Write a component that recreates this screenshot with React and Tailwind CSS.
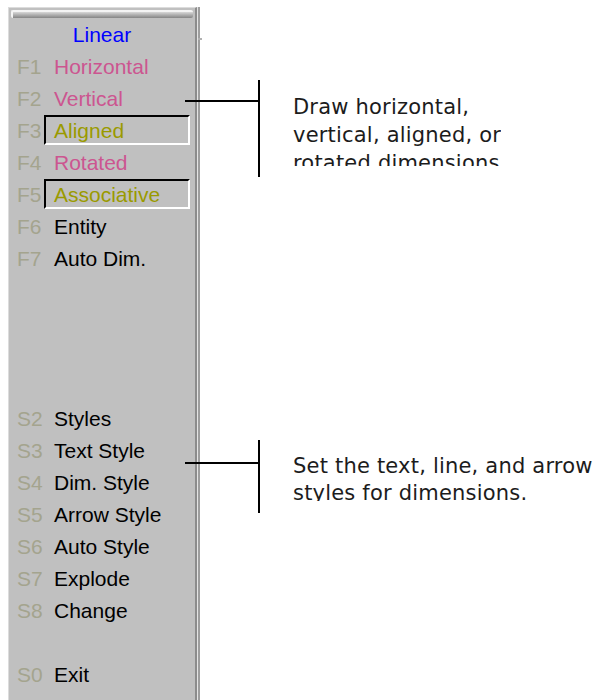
const rows = [
  { key: "F1", label: "Horizontal", color: "text-[#cc5590]" },
  { key: "F2", label: "Vertical", color: "text-[#cc5590]" },
  { key: "F3", label: "Aligned", color: "text-[#9a9a00]", boxed: true },
  { key: "F4", label: "Rotated", color: "text-[#cc5590]" },
  { key: "F5", label: "Associative", color: "text-[#9a9a00]", boxed: true },
  { key: "F6", label: "Entity", color: "text-black" },
  { key: "F7", label: "Auto Dim.", color: "text-black" },
  null,
  null,
  null,
  null,
  { key: "S2", label: "Styles", color: "text-black" },
  { key: "S3", label: "Text Style", color: "text-black" },
  { key: "S4", label: "Dim. Style", color: "text-black" },
  { key: "S5", label: "Arrow Style", color: "text-black" },
  { key: "S6", label: "Auto Style", color: "text-black" },
  { key: "S7", label: "Explode", color: "text-black" },
  { key: "S8", label: "Change", color: "text-black" },
  null,
  { key: "S0", label: "Exit", color: "text-black" },
];

function MenuRow({ row }) {
  if (!row) return <div className="h-[32px]" />;
  return (
    <div className="flex items-center h-[32px] pl-[8px]">
      <span className="w-[27px] text-[#a4a48e]">{row.key}</span>
      <div
        className={`flex-1 mr-[5px] h-[30px] flex items-center pl-[8px] border-2 ${
          row.boxed
            ? "border-t-black border-l-black border-b-white border-r-white"
            : "border-transparent"
        } ${row.color}`}
      >
        {row.label}
      </div>
    </div>
  );
}

function Callout({ lineTop, lineHeight, textTop, clipHeight, leading, children }) {
  return (
    <div className="flex items-start -ml-[15px]">
      <div className="w-[73px] h-[2px] bg-black" style={{ marginTop: lineTop }} />
      <div className="w-[2px] bg-black" style={{ height: lineHeight }} />
      <div
        className="ml-[33px] overflow-hidden text-[21px] tracking-[0.2px] text-[#1c1c1c] font-['DejaVu_Sans',sans-serif]"
        style={{ marginTop: textTop, height: clipHeight, lineHeight: leading }}
      >
        {children}
      </div>
    </div>
  );
}

export default function App() {
  return (
    <div className="w-[596px] h-[700px] bg-white flex overflow-hidden font-['Liberation_Sans',Arial,sans-serif]">
      <div className="w-[8px]" />
      <div className="flex mt-[7px] h-[693px]">
        <div className="w-[189px] bg-[#c0c0c0] border-l border-t border-[#dcdcdc] border-r-2 border-r-[#8c8c8c] text-[21px] leading-none">
          <div className="mx-[2px] mt-[2px] h-[8px] rounded-[2px] border-t-2 border-l-2 border-[#f4f4f4] bg-linear-to-b from-[#d8d8d8] to-[#858585]" />
          <div className="h-[32px] flex items-center justify-center text-[#0000ff]">Linear</div>
          {rows.map((row, i) => (
            <MenuRow key={i} row={row} />
          ))}
        </div>
        <div className="w-[1px] bg-[#e4e4e4]" />
        <div className="flex flex-col w-[2px] bg-[#9e9e9e]">
          <div className="h-[31px]" />
          <div className="w-[4px] h-[2px] bg-[#b0b0b0]" />
        </div>
      </div>
      <div className="flex flex-col">
        <div className="h-[80px]" />
        <Callout lineTop={20} lineHeight={97} textTop={13} clipHeight={73} leading="28px">
          <div>Draw horizontal,</div>
          <div>vertical, aligned, or</div>
          <div>rotated dimensions</div>
        </Callout>
        <div className="h-[263px]" />
        <Callout lineTop={22} lineHeight={73} textTop={13} clipHeight={48} leading="27px">
          <div className="whitespace-nowrap">Set the text, line, and arrow</div>
          <div>styles for dimensions.</div>
        </Callout>
      </div>
    </div>
  );
}
